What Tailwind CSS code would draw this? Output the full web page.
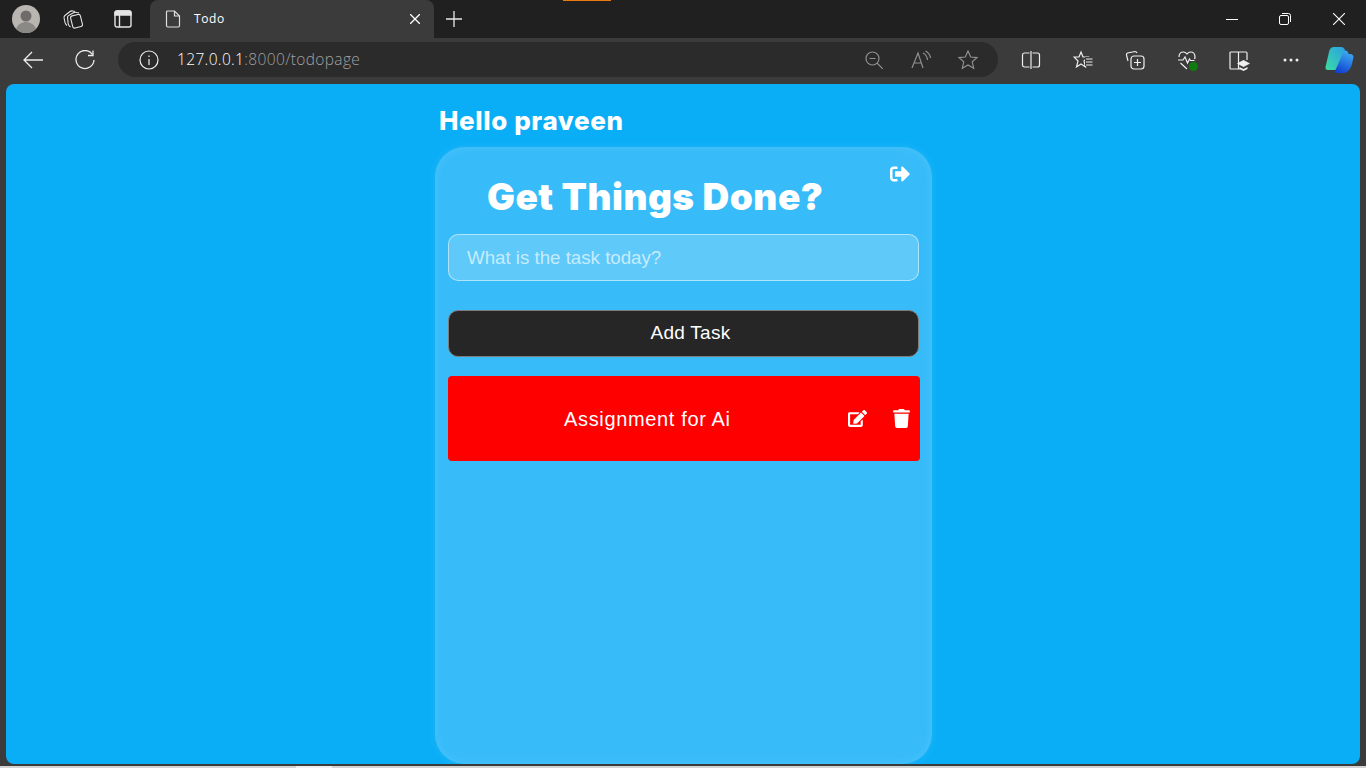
<!DOCTYPE html>
<html lang="en">
<head>
  <meta charset="UTF-8">
  <meta name="viewport" content="width=device-width, initial-scale=1.0">
  <title>Todo</title>
  <script src="https://cdn.jsdelivr.net/npm/@tailwindcss/browser@4"></script>
</head>
<body class="relative h-[768px] w-[1366px] overflow-hidden bg-[#3b3b3b] font-['Open_Sans',sans-serif]">

  <!-- orange sliver at the top edge -->
  <div class="absolute left-[563px] top-0 h-px w-12 bg-[#e87a10]"></div>

  <!-- tab strip -->
  <div class="flex h-[38px] items-end bg-[#202020] text-white">
    <div class="flex h-[38px] w-[150px] items-center">
      <svg class="ml-[12px] h-7 w-7" viewBox="0 0 28 28">
        <circle cx="14" cy="14" r="14" fill="#b9b6b2"/>
        <circle cx="14" cy="11" r="5.5" fill="#6e6c6a"/>
        <path d="M4 24c2-5 6-7 10-7s8 2 10 7a14 14 0 0 1-20 0z" fill="#8b8986"/>
      </svg>
      <svg class="ml-[23px] h-5 w-5" viewBox="0 0 20 20" fill="none" stroke="#e4e4e4" stroke-width="1.1">
        <path d="M1 8.500Q1 7 2.500 6L7 2.500q1.500-1 3-.5l2 .5"/>
        <path d="M1 8.500l1 5q.3 1.500 2 3"/>
        <path d="M4.500 8Q5 6.500 6.500 6L11 3.500q1.500-.5 3 0l2 .5"/>
        <path d="M4.500 8l.7 7q.3 1.500 2.300 3"/>
        <rect x="8.500" y="6" width="10" height="12.500" rx="2" transform="rotate(-14 13.500 12)"/>
      </svg>
      <svg class="ml-[31px] h-[18px] w-[18px]" viewBox="0 0 18 18" fill="none" stroke="#e4e4e4" stroke-width="1.4">
        <rect x="1" y="1" width="16" height="16" rx="2"/>
        <path d="M1 3.500a2 2 0 0 1 2-2.500h12a2 2 0 0 1 2 2.500V5H1z" fill="#e4e4e4"/>
        <path d="M5.500 5v12" stroke-width="1.400"/>
      </svg>
    </div>
    <div class="flex h-[38px] w-[284px] items-center rounded-t-lg bg-[#3b3b3b]">
      <svg class="ml-[15px] h-[18px] w-4" viewBox="0 0 16 18" fill="none" stroke="#dedede" stroke-width="1.2">
        <path d="M2.500 1h7l5 5v9.500a1.500 1.500 0 0 1-1.500 1.500H3a1.500 1.500 0 0 1-1.500-1.500V2A1 1 0 0 1 2.500 1z"/>
        <path d="M9.500 1v5h5"/>
      </svg>
      <span class="ml-[13px] text-[12px] tracking-[0.6px] text-white">Todo</span>
      <svg class="ml-auto mr-[14px] h-[10px] w-[10px]" viewBox="0 0 10 10" stroke="#fff" stroke-width="1.3"><path d="M0 0l10 10M10 0 0 10"/></svg>
    </div>
    <svg class="mb-[11px] ml-[12px] h-4 w-4" viewBox="0 0 16 16" stroke="#e8e8e8" stroke-width="1.300"><path d="M8 0v16M0 8h16"/></svg>
    <div class="ml-auto flex h-[38px] items-center">
      <svg class="mr-[41px] h-px w-3" viewBox="0 0 12 1"><rect width="12" height="1" fill="#fff"/></svg>
      <svg class="mr-[42px] h-3 w-3" viewBox="0 0 12 12" fill="none" stroke="#fff" stroke-width="1">
        <rect x=".5" y="2.500" width="9" height="9" rx="1.500"/><path d="M3 .5h6.500A2 2 0 0 1 11.500 2.500V9"/>
      </svg>
      <svg class="mr-[21px] h-3 w-3" viewBox="0 0 12 12" stroke="#fff" stroke-width="1.100"><path d="M0 0l12 12M12 0 0 12"/></svg>
    </div>
  </div>

  <!-- toolbar -->
  <div class="flex h-[46px] items-center bg-[#3b3b3b] pb-[3px]">
    <svg class="ml-[23px] h-[18px] w-5" viewBox="0 0 20 18" fill="none" stroke="#eee" stroke-width="1.300"><path d="M20 9H1M9 1 1 9l8 8"/></svg>
    <svg class="ml-[32px] h-5 w-5" viewBox="0 0 20 20" fill="none" stroke="#eee" stroke-width="1.300"><path d="M17.500 4.500A9 9 0 1 0 19 10"/><path d="M18 .5v5h-5"/></svg>
    <div class="ml-[23px] flex h-[35px] w-[880px] items-center rounded-full bg-[#2b2b2b]">
      <svg class="ml-[21px] h-5 w-5" viewBox="0 0 20 20" fill="none" stroke="#eee" stroke-width="1.200"><circle cx="10" cy="10" r="9"/><path d="M10 9v6M10 5.500v1.500"/></svg>
      <span class="ml-[18px] pt-[1px] text-[15.500px] font-light tracking-[0.35px] text-white">127.0.0.1<span class="text-[#a0a0a0]">:8000/todopage</span></span>
      <svg class="ml-auto h-[18px] w-[18px]" viewBox="0 0 18 18" fill="none" stroke="#8f8f8f" stroke-width="1.200"><circle cx="7.500" cy="7.500" r="6.500"/><path d="M12 12l6 6M4.500 7.500h6"/></svg>
      <svg class="ml-[28px] h-[20px] w-[20px]" viewBox="0 0 20 20" fill="none" stroke="#8f8f8f" stroke-width="1.200"><path d="M1 18 7 3l5 15M3 13h7M12 3q4 2 4.500 7M14.500 1q4.500 2.500 5 7"/></svg>
      <svg class="ml-[27px] mr-[20px] h-5 w-5" viewBox="0 0 20 20" fill="none" stroke="#8f8f8f" stroke-width="1.200"><path d="M10 1l2.700 6 6.300.6-4.800 4.200 1.500 6.400L10 15l-5.700 3.200 1.500-6.400L1 7.600 7.300 7z"/></svg>
    </div>
    <svg class="ml-[23px] h-5 w-5" viewBox="0 0 20 20" fill="none" stroke="#eee" stroke-width="1.200"><rect x="1.500" y="3" width="17" height="14" rx="2"/><path d="M10 1v18" stroke="#3b3b3b" stroke-width="3"/><path d="M10 1v18"/></svg>
    <svg class="ml-[32px] h-5 w-5" viewBox="0 0 20 20" fill="none" stroke="#eee" stroke-width="1.200">
      <path d="M8 2l2 5h5l-4 4 1.500 6-4.500-3-4.500 3L5 11 1 7h5z"/>
      <rect x="12" y="7" width="8" height="9" fill="#3b3b3b" stroke="none"/>
      <path d="M13 9h6.500M13 12h6.500M13 15h6.500"/>
    </svg>
    <svg class="ml-[32px] h-5 w-5" viewBox="0 0 20 20" fill="none" stroke="#eee" stroke-width="1.200"><path d="M3 11 1.500 5q-.3-1.500 1-2L10 1.500q1.500 0 2 1.500"/><rect x="6" y="6" width="13" height="13" rx="3"/><path d="M12.500 9v7M9 12.500h7"/></svg>
    <div class="relative ml-[32px] h-5 w-5">
      <svg class="h-5 w-5" viewBox="0 0 20 20" fill="none" stroke="#eee" stroke-width="1.200"><path d="M2 7q0-5 4.500-5 2 0 3.500 2 1.500-2 3.500-2Q18 2 18 7q0 1-.5 2M1 10h5l2-3 2.500 6 2-4 1 1.500h4M3.500 13 10 19"/></svg>
      <span class="absolute bottom-[-1px] right-[-1px] h-[9px] w-[9px] rounded-full bg-[#107c10]"></span>
    </div>
    <div class="relative ml-[32px] h-5 w-5">
      <svg class="h-5 w-5" viewBox="0 0 20 20" fill="none" stroke="#eee" stroke-width="1.200"><path d="M9.500 2H2a1 1 0 0 0-1 1v15a1 1 0 0 0 1 1h7.500zM9.500 2H17a1 1 0 0 1 1 1v7M9.500 19h2"/></svg>
      <svg class="absolute bottom-[-1px] right-[-1px] h-[11px] w-[13px]" viewBox="0 0 13 11" fill="#eee"><path d="M6.500 0 13 3.500 6.500 7 0 3.500zM2.500 7l4 2 4-2v2l-4 2-4-2z"/></svg>
    </div>
    <svg class="ml-[34px] h-1 w-[16px]" viewBox="0 0 16 4" fill="#eee"><circle cx="2" cy="2" r="1.500"/><circle cx="8" cy="2" r="1.500"/><circle cx="14" cy="2" r="1.500"/></svg>
    <svg class="ml-[26px] h-[28px] w-[29px]" viewBox="0 0 29 28">
      <defs>
        <linearGradient id="cpA" x1="1" y1="0" x2="0" y2="1"><stop offset="0" stop-color="#2b9fe8"/><stop offset="1" stop-color="#3adca0"/></linearGradient>
        <linearGradient id="cpB" x1="0.700" y1="0" x2="0.300" y2="1"><stop offset="0" stop-color="#3eaef2"/><stop offset="1" stop-color="#1040d0"/></linearGradient>
      </defs>
      <path d="M9 1h7q3 0 4 3l-5 16q-1 4-5 4H3q-3 0-2.500-3L4 6q1-5 5-5z" fill="url(#cpA)"/>
      <path d="M19 5q2-1 3.500.5 1 1 1 2.500H25q3 0 3.500 3l-1.500 7q-1.500 6-6 8.500Q19 27.500 16 27H11q-2 0-1-2z" fill="url(#cpB)"/>
    </svg>
  </div>

  <!-- page viewport -->
  <main class="mx-[6px] flex h-[680px] justify-center overflow-hidden rounded-lg bg-[#0aaef6] pl-[1px]">
    <div class="flex w-[497px] flex-col">
      <h2 class="ml-[4px] mt-[20px] h-[43px] font-['Inter',sans-serif] text-[26px] leading-[34px] font-extrabold tracking-[0.6px] text-white">Hello praveen</h2>
      <section class="relative flex-1 rounded-[30px] bg-[#38bcf9] px-[13px] shadow-[inset_0_0_8px_rgba(255,255,255,0.1),0_0_8px_rgba(255,255,255,0.1)]">
        <svg class="absolute right-[22px] top-[17px] h-5 w-5" viewBox="0 0 512 512" fill="#fff"><path d="M497 273L329 441c-15 15-41 4.500-41-17v-96H152c-13.300 0-24-10.700-24-24v-96c0-13.300 10.700-24 24-24h136V88c0-21.400 25.900-32 41-17l168 168c9.300 9.400 9.300 24.600 0 34zM192 436v-40c0-6.600-5.400-12-12-12H96c-17.700 0-32-14.300-32-32V160c0-17.700 14.300-32 32-32h84c6.600 0 12-5.400 12-12V76c0-6.600-5.400-12-12-12H96c-53 0-96 43-96 96v192c0 53 43 96 96 96h84c6.600 0 12-5.400 12-12z"/></svg>
        <h1 class="ml-[39px] mt-[26px] h-[61px] font-['Inter',sans-serif] text-[37px] leading-[48px] font-black tracking-[0.5px] text-white">Get Things Done?</h1>
        <input class="block h-[47px] w-[471px] rounded-[10px] border border-white/50 bg-[#5fc9fa] px-[18px] font-['Liberation_Sans',sans-serif] text-[18.700px] text-white placeholder:text-[#c6ecfc] outline-none" placeholder="What is the task today?">
        <button class="mt-[29px] block h-[47px] w-[471px] rounded-[10px] border border-[#7d7d7d] bg-[#262626] pl-[14px] font-['Liberation_Sans',sans-serif] text-[19px] tracking-[0.25px] text-white">Add Task</button>
        <div class="mt-[19px] flex h-[85px] w-[472px] items-center rounded-[4px] bg-[#ff0000] text-white">
          <span class="ml-[116px] w-[167px] whitespace-nowrap font-['Liberation_Sans',sans-serif] text-[20px] tracking-[0.65px]">Assignment for Ai</span>
          <svg class="ml-[117px] h-[17px] w-[19px]" viewBox="0 0 576 512" fill="#fff"><path d="M402.600 83.200l90.200 90.200c3.800 3.800 3.800 10 0 13.800L274.400 405.600l-92.800 10.300c-12.400 1.400-22.900-9.100-21.500-21.500l10.300-92.800L388.800 83.200c3.800-3.800 10-3.800 13.800 0zm162-22.900l-48.800-48.800c-15.200-15.200-39.900-15.200-55.200 0l-35.400 35.400c-3.800 3.800-3.800 10 0 13.800l90.200 90.200c3.800 3.800 10 3.800 13.800 0l35.400-35.400c15.200-15.300 15.200-40 0-55.200zM384 346.200V448H64V128h229.800c3.200 0 6.200-1.300 8.500-3.500l40-40c7.600-7.600 2.200-20.500-8.500-20.500H48C21.500 64 0 85.500 0 112v352c0 26.500 21.500 48 48 48h352c26.500 0 48-21.500 48-48V306.200c0-10.700-12.900-16-20.500-8.500l-40 40c-2.200 2.300-3.500 5.300-3.500 8.500z"/></svg>
          <svg class="ml-[26px] h-[19px] w-[17px]" viewBox="0 0 448 512" fill="#fff"><path d="M432 32H312l-9.400-18.700A24 24 0 0 0 281.100 0H166.800a23.720 23.720 0 0 0-21.400 13.300L136 32H16A16 16 0 0 0 0 48v32a16 16 0 0 0 16 16h416a16 16 0 0 0 16-16V48a16 16 0 0 0-16-16zM53.200 467a48 48 0 0 0 47.900 45h245.800a48 48 0 0 0 47.900-45L416 128H32z"/></svg>
        </div>
      </section>
    </div>
  </main>

  <!-- bottom edge -->
  <div class="mt-[2px] flex h-[2px] bg-[#d4d4d4]"><div class="ml-[296px] w-9 bg-[#f0f0f0]"></div></div>

</body>
</html>
